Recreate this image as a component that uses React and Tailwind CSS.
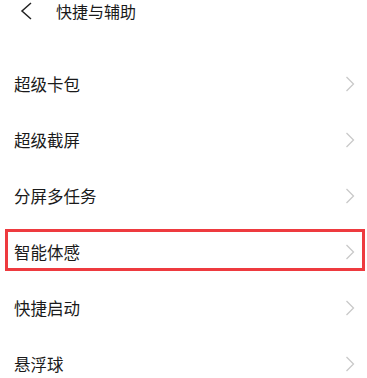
import React from "react";

const items = ["超级卡包", "超级截屏", "分屏多任务", "智能体感", "快捷启动", "悬浮球"];

function Chevron() {
  return (
    <svg width="10" height="16" viewBox="0 0 10 16" className="shrink-0">
      <polyline points="1.5,1 8.5,8 1.5,15" fill="none" stroke="#c9c9c9" strokeWidth="1.3" />
    </svg>
  );
}

export default function App() {
  return (
    <div
      className="w-[367px] h-[378px] bg-white overflow-hidden text-[#1a1a1a]"
      style={{ fontFamily: '"Noto Sans CJK SC", "Noto Sans", sans-serif' }}
    >
      <div className="flex items-center h-[22px] pl-[20px]">
        <svg width="13" height="18" viewBox="0 0 13 18">
          <polyline points="11,1 2,9 11,17" fill="none" stroke="#222" strokeWidth="1.5" />
        </svg>
        <span className="ml-[23px] text-[16px] leading-none">快捷与辅助</span>
      </div>
      <div className="mt-[34px]">
        {items.map((t, i) => (
          <div key={t} className="relative flex items-center justify-between h-[56px] pl-[14px] pr-[12px]">
            <span className="text-[16.5px] leading-none">{t}</span>
            <Chevron />
            {i === 3 && (
              <div className="absolute left-[5px] right-[2px] top-[5px] h-[42px] border-[3px] border-[#ee3a3f]" />
            )}
          </div>
        ))}
      </div>
    </div>
  );
}
